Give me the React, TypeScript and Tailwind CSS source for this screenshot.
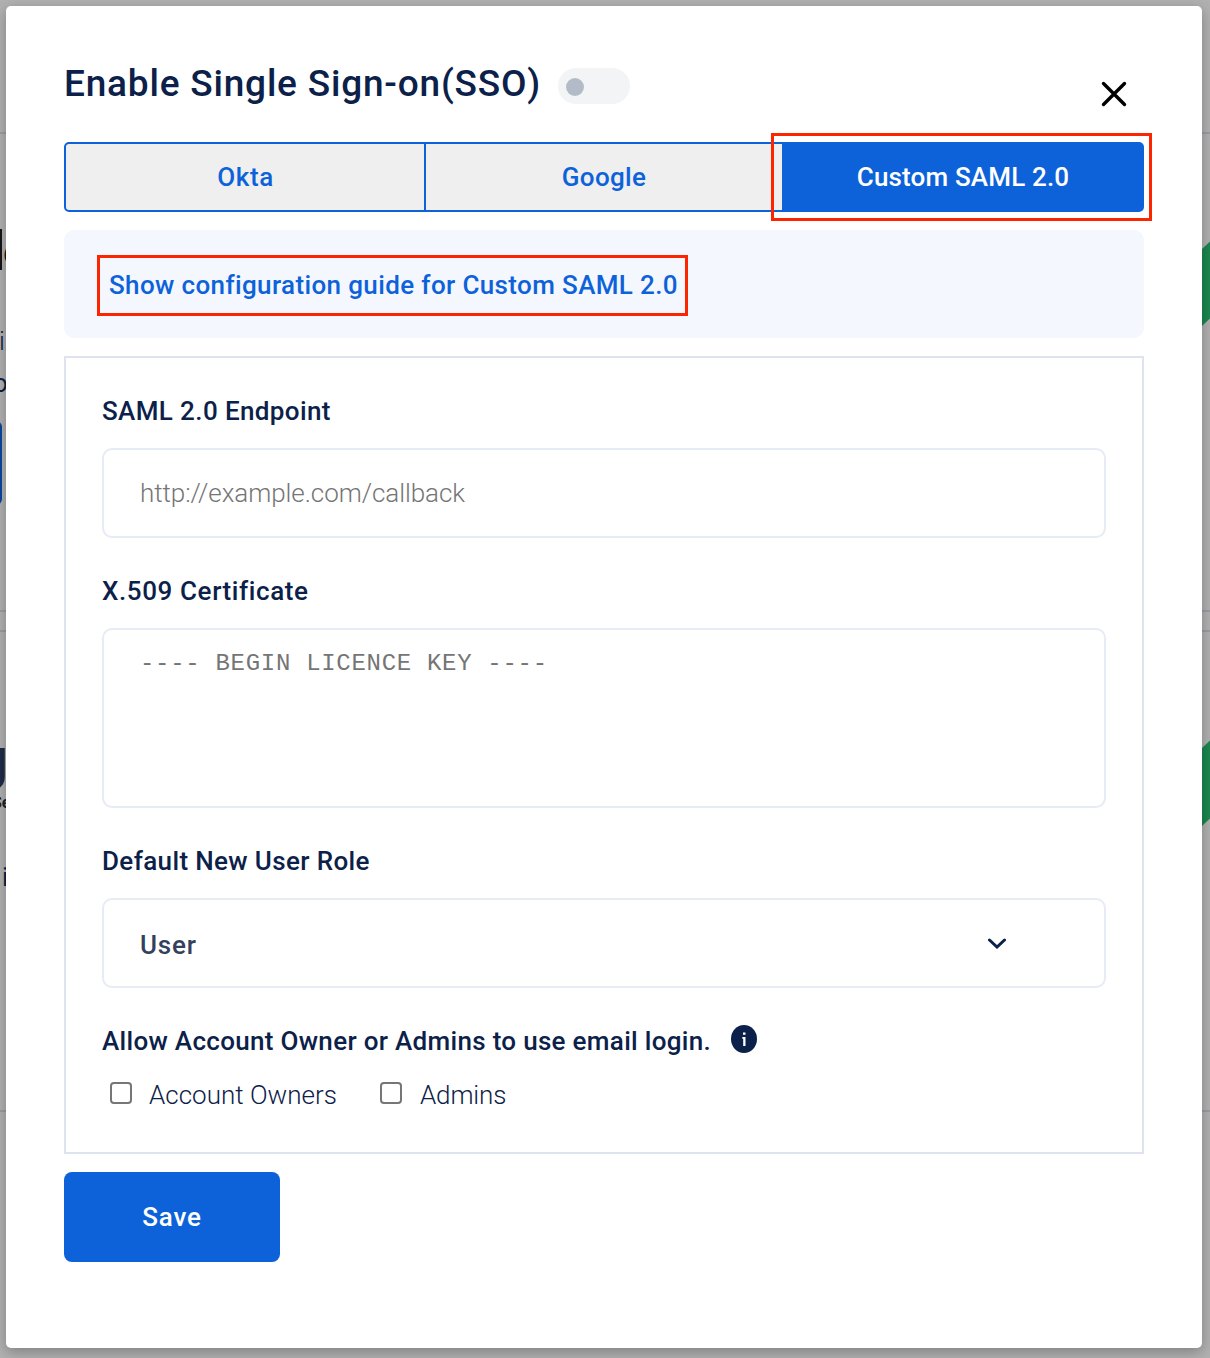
import type { ReactNode } from 'react';

function Backdrop() {
  return (
    <div aria-hidden="true" className="absolute inset-0 overflow-hidden bg-[#b1b1b1] text-[#0c1f45]">
      <div className="absolute inset-x-0 top-[132px] h-0.5 bg-[#9c9ca2]" />
      <div className="absolute inset-x-0 top-[610px] h-0.5 bg-[#9c9ca2]" />
      <div className="absolute inset-x-0 top-[630px] h-0.5 bg-[#9c9ca2]" />
      <div className="absolute inset-x-0 top-[1110px] h-0.5 bg-[#9c9ca2]" />
      <span className="absolute top-[229px] left-0 h-[41px] w-[1.5px] bg-[#161616]" />
      <span className="absolute top-[229px] left-[3px] text-[40px] leading-[48px] font-medium text-[#161616]">e</span>
      <span className="absolute top-[326px] -left-px text-[26px] leading-[31px] font-light">i</span>
      <span className="absolute top-[368px] -left-[7px] text-[26px] leading-[31px]">o</span>
      <div className="absolute top-[421px] -left-5 h-[84px] w-[22px] rounded-md bg-[#0a45a0]" />
      <span className="absolute top-[735px] -left-[25px] text-[60px] leading-[70px] font-bold text-[#1f2c47]">J</span>
      <span className="absolute top-[793px] -left-[8px] text-[16px] leading-5 font-bold text-[#202020]">Se</span>
      <span className="absolute top-[862px] left-[2px] text-[26px] leading-[31px]">i</span>
      <svg className="absolute top-[241px] left-[1202px]" width="8" height="86" viewBox="0 0 8 86">
        <path d="M0 8L8 .5V77.500L0 85Z" fill="#1b874f" />
      </svg>
      <svg className="absolute top-[740px] left-[1202px]" width="8" height="86" viewBox="0 0 8 86">
        <path d="M0 8L8 .5V78.500L0 86Z" fill="#1b874f" />
      </svg>
    </div>
  );
}

function Label({ children, className }: { children: ReactNode; className: string }) {
  return <div className={`flex h-9 items-center font-medium whitespace-nowrap ${className}`}>{children}</div>;
}

export default function App() {
  return (
    <div className="relative h-[1358px] w-[1210px] overflow-hidden px-1.5 pt-1.5 font-['Roboto',sans-serif] text-[26px] text-[#0c2149]">
      <Backdrop />
      <div className="relative h-[1342px] w-[1196px] rounded-[5px] bg-white px-[58px] shadow-[0_4px_14px_rgba(0,0,0,0.28)]">
        <header className="flex h-[136px] items-start">
          <h1 className="mt-[58px] w-[494px] text-[37px] leading-10 font-medium tracking-[0.8px] whitespace-nowrap">
            Enable Single Sign-on(SSO)
          </h1>
          <button role="switch" aria-checked="false" className="mt-[62px] flex h-9 w-[72px] items-center rounded-full bg-[#f2f4f6] pt-0.5 pl-2">
            <span className="size-[18px] rounded-full bg-[#b4bbc8]" />
          </button>
          <button aria-label="Close" className="mt-[75px] mr-[17px] ml-auto">
            <svg width="26" height="26" viewBox="0 0 26 26" fill="none" stroke="#000" strokeWidth="3.400" strokeLinecap="round">
              <path d="M2.500 2.500L23.500 23.500M23.500 2.500L2.500 23.500" />
            </svg>
          </button>
        </header>

        <nav className="relative flex h-[70px] w-[1080px] overflow-visible font-medium text-[#0d62da]">
          <button className="w-[362px] rounded-l-[5px] border-2 border-[#0d62da] bg-[#efefef] pl-px tracking-[0.6px]">Okta</button>
          <button className="w-[356px] border-y-2 border-[#0d62da] bg-[#efefef] tracking-[0.3px]">Google</button>
          <button className="w-[362px] rounded-r-[5px] bg-[#0d62da] tracking-[0.16px] text-white">Custom SAML 2.0</button>
          <div className="pointer-events-none absolute -top-[9px] left-[707px] h-[88px] w-[381px] border-3 border-[#fb2500]" />
        </nav>

        <section className="mt-[18px] flex h-[108px] items-start rounded-[10px] bg-[#f4f7fe] pt-[25px] pl-[33px]">
          <a className="flex h-[61px] w-[591px] items-center border-3 border-[#fb2500] pl-[9px] font-medium tracking-[0.37px] whitespace-nowrap text-[#0d62da]">
            Show configuration guide for Custom SAML 2.0
          </a>
        </section>

        <form className="mt-[18px] flex h-[798px] flex-col border-2 border-[#dfe3ef] px-9 pt-[35px]">
          <Label className="tracking-[0.38px]">SAML 2.0 Endpoint</Label>
          <input
            placeholder="http://example.com/callback"
            className="mt-[19px] h-[90px] w-full shrink-0 rounded-[10px] border-2 border-[#e7ebf6] px-9 font-light tracking-[-0.06px] placeholder:text-[#757575] placeholder:opacity-100"
          />

          <Label className="mt-[35px] tracking-[0.6px]">X.509 Certificate</Label>
          <textarea
            placeholder="---- BEGIN LICENCE KEY ----"
            className="mt-[19px] h-[180px] w-full shrink-0 resize-none rounded-[10px] border-2 border-[#e7ebf6] px-9 pt-[19px] font-['Liberation_Mono',monospace] text-[24px] leading-[30px] tracking-[0.7px] placeholder:text-[#757575] placeholder:opacity-100"
          />

          <Label className="mt-[35px] tracking-[0.37px]">Default New User Role</Label>
          <button type="button" className="mt-[19px] flex h-[90px] w-full shrink-0 items-center justify-between rounded-[10px] border-2 border-[#e7ebf6] pr-[98px] pl-9">
            <span className="mt-1 font-medium tracking-[0.8px] text-[#33415c]">User</span>
            <svg width="18" height="11" viewBox="0 0 18 11" fill="none" stroke="#0c2149" strokeWidth="3" strokeLinecap="round">
              <path d="M1.500 2L9 9L16.500 2" />
            </svg>
          </button>

          <div className="mt-[35px] flex items-center">
            <Label className="w-[629px] tracking-[0.31px]">Allow Account Owner or Admins to use email login.</Label>
            <svg className="-mt-1" width="26" height="28" viewBox="0 0 26 28">
              <ellipse cx="13" cy="14" rx="13" ry="14" fill="#0c2149" />
              <path d="M12 7.500h2.500v2.200H12zM11.300 12h3.200v9H12.200v-7.300h-.9z" fill="#fff" />
            </svg>
          </div>

          <div className="mt-[18px] flex h-9 items-center font-light">
            <label className="flex w-[270px] items-center pl-2">
              <span className="-mt-1 mr-[17px] size-[22px] rounded-[4px] border-2 border-[#767676]" />
              Account Owners
            </label>
            <label className="flex items-center pl-2 tracking-[-0.15px]">
              <span className="-mt-1 mr-[18px] size-[22px] rounded-[4px] border-2 border-[#767676]" />
              Admins
            </label>
          </div>
        </form>

        <button className="mt-[18px] h-[90px] w-[216px] rounded-lg bg-[#0d62da] font-medium tracking-[0.8px] text-white">Save</button>
      </div>
    </div>
  );
}
